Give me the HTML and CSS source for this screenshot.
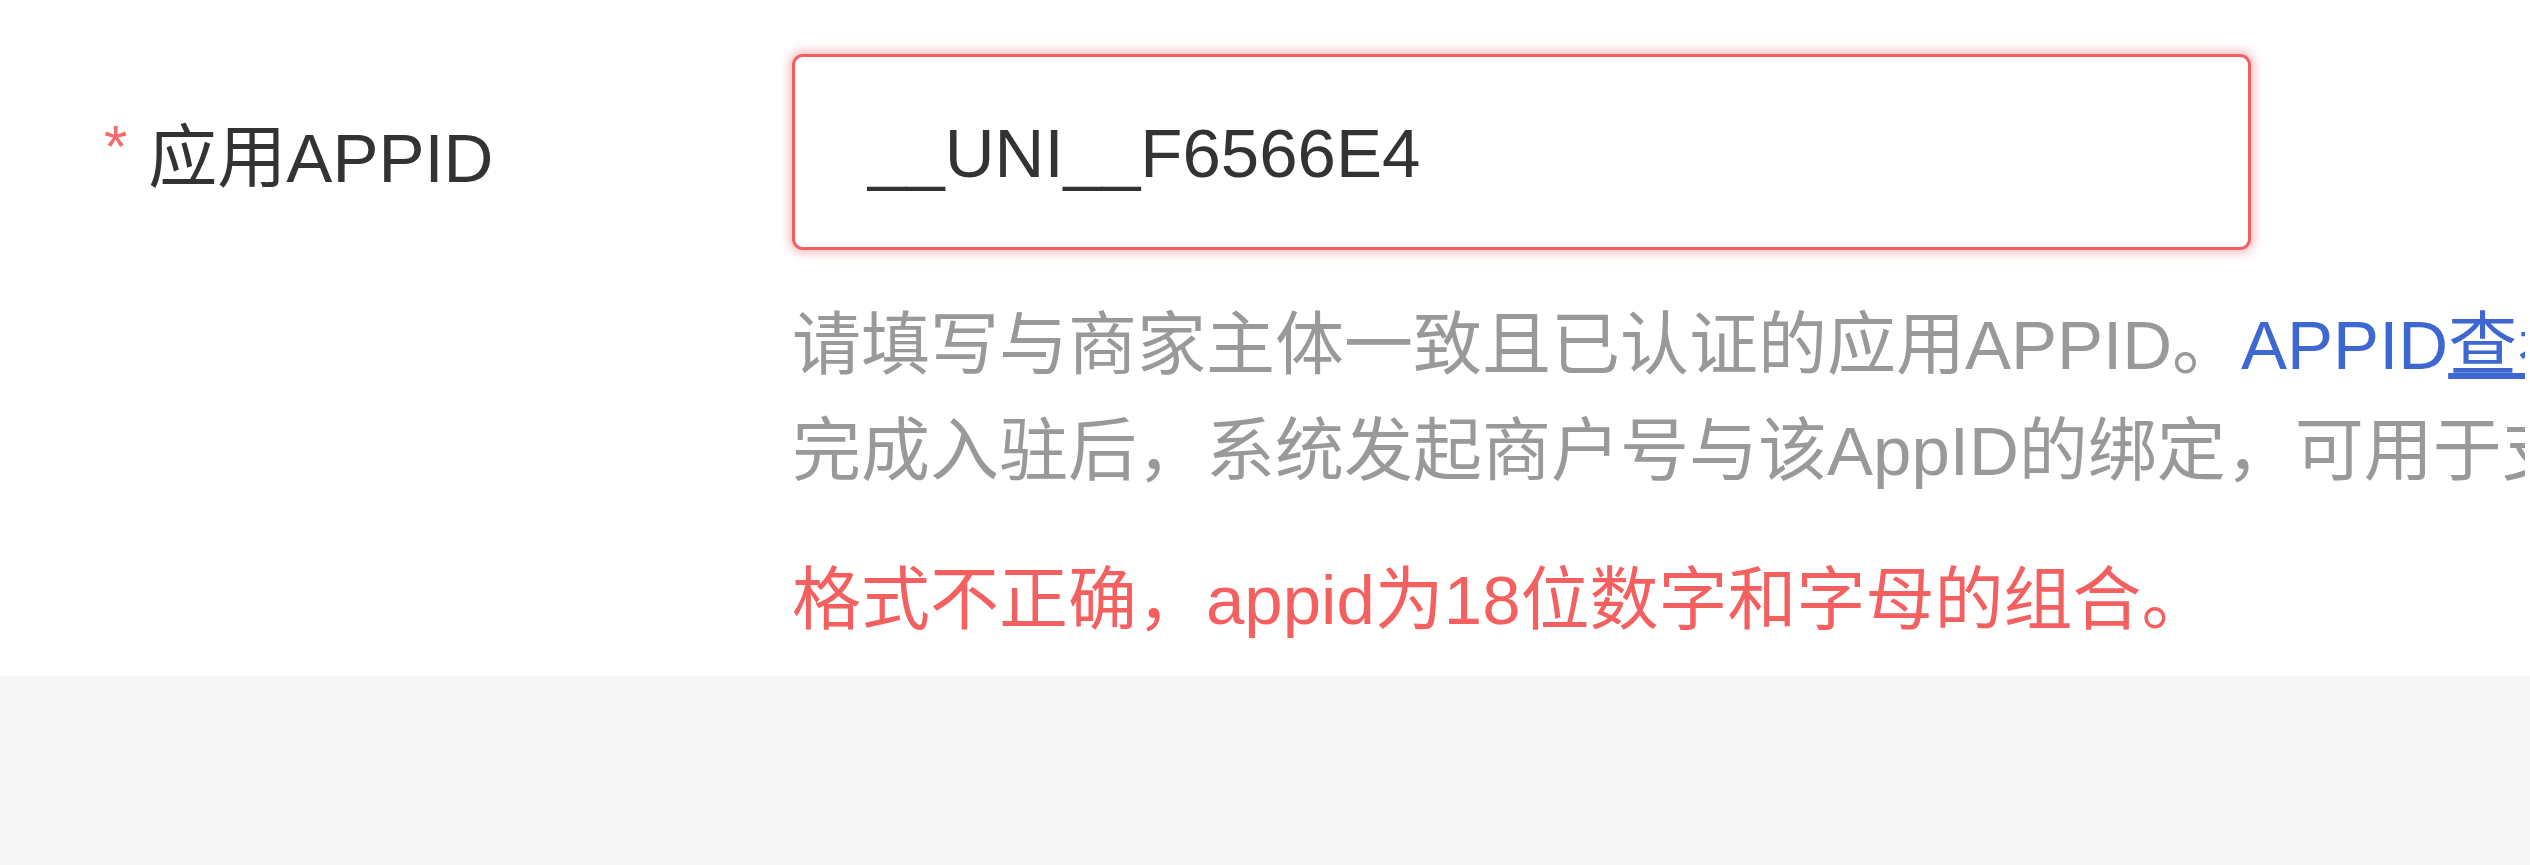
FILE: index.html
```html
<html>

<head>
    <meta charset="utf-8">
    <link rel="stylesheet" href="styles.css">
</head>

<body>
    <div class="m-panel">
        <!-- appid row -->
        <div class="m-form-item">
            <div class="m-label"><span class="m-required">*</span>应用APPID</div>
            <div class="m-field">
                <div class="m-input is-error">__UNI__F6566E4</div>
                <div class="m-help">
                    <div class="m-line">请填写与商家主体一致且已认证的应用APPID。<a class="m-link">APPID<span class="m-under">查看指引</span></a></div>
                    <div class="m-line">完成入驻后，系统发起商户号与该AppID的绑定，可用于支付。</div>
                </div>
                <div class="m-error">格式不正确，appid为18位数字和字母的组合。</div>
            </div>
        </div>
    </div>
</body>

</html>
```

FILE: styles.css
```css
body {
    margin: 0;
    background-color: #f6f6f6;
    font-family: "Liberation Sans", "Noto Sans CJK SC", sans-serif;
    font-size: 69px;
}

.m-panel {
    height: 676px;
    background-color: #fff;
    overflow: hidden;
}

.m-form-item {
    display: flex;
    flex-direction: row;
    padding-top: 54px;
}

/* label column */
.m-label {
    box-sizing: border-box;
    width: 792px;
    flex-shrink: 0;
    height: 196px;
    padding-left: 104px;
    display: flex;
    align-items: center;
    color: #333;
    white-space: nowrap;
}

.m-required {
    color: #f56c6c;
    margin-right: 21px;
    font-size: 60px;
    position: relative;
    top: -6px;
}

/* field column */
.m-field {
    display: flex;
    flex-direction: column;
    min-width: 0;
}

.m-input {
    box-sizing: border-box;
    width: 1459px;
    height: 196px;
    border: 3px solid #dcdfe6;
    border-radius: 11px;
    padding-left: 73px;
    padding-top: 3px;
    display: flex;
    align-items: center;
    color: #333;
    background-color: #fff;
}

.m-input.is-error {
    border-color: #f25d5d;
    box-shadow: 0 0 8px 4px rgba(245, 108, 108, 0.38);
}

.m-help {
    width: 1733px;
    overflow: hidden;
    margin-top: 43px;
    color: #999;
    line-height: 106px;
    white-space: nowrap;
}

.m-link {
    color: #3e67d2;
}

.m-under {
    text-decoration: underline;
}

.m-error {
    margin-top: 43px;
    color: #f45f5f;
    line-height: 106px;
    white-space: nowrap;
}
```
